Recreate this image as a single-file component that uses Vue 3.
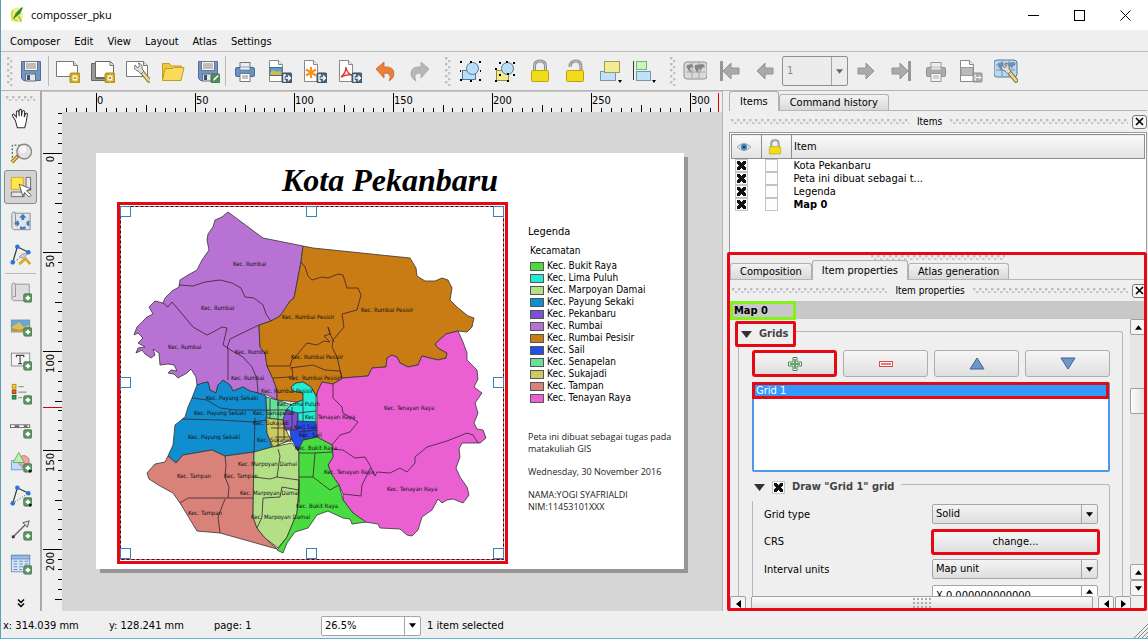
<script setup>
const menus = ['Composer', 'Edit', 'View', 'Layout', 'Atlas', 'Settings']

const fileTools = [
  ['save', 'Save project'], ['sep'], ['new', 'New composer'], ['dup', 'Duplicate composer'], ['manager', 'Composer manager'],
  ['folder', 'Add items from template'], ['template', 'Save as template'], ['sep'], ['print', 'Print'], ['eximg', 'Export as image'],
  ['exsvg', 'Export as SVG'], ['expdf', 'Export as PDF'], ['undo', 'Undo'], ['redo', 'Redo'],
]
const arrangeTools = [
  ['group', 'Group items'], ['ungroup', 'Ungroup items'], ['lock', 'Lock items'], ['unlock', 'Unlock items'],
  ['raise', 'Raise items'], ['align', 'Align items'],
]
const sideTools = [
  ['pan', 'Pan'], ['zoom', 'Zoom'], ['select', 'Select item'], ['content', 'Move content'], ['nodes', 'Edit nodes'], ['sep'],
  ['addmap', 'Add map'], ['addimg', 'Add image'], ['addlabel', 'Add label'], ['addlegend', 'Add legend'], ['addscale', 'Add scalebar'],
  ['addshape', 'Add shape'], ['addnodes', 'Add nodes item'], ['addarrow', 'Add arrow'], ['addtable', 'Add attribute table'],
]

function ticks(from, to) {
  const list = []
  for (let n = from; n <= to; n++) {
    list.push({ n, pos: Math.round(n * 9.9), label: n % 10 === 0 ? n * 5 : null, len: n % 10 === 0 ? 19 : n % 5 === 0 ? 7 : 4 })
  }
  return list
}
const hTicks = ticks(-3, 62)
const vTicks = ticks(-4, 45)

const regions = [
  { fill: '#b772d3', d: 'M228 212L263 238L303 246L301 262L294 298L290 301L285 310L280 316L271 321L259 325L260 347L265 353L267 366L273 379L277 390L277 400L267 395L258 393L250 391L243 387L233 391L230 385L223 380L218 385L216 393L210 390L208 382L203 383L197 385L196 377L191 369L187 373L178 378L174 374L168 373L171 370L177 371L174 365L168 364L160 365L159 353L153 349L155 355L151 358L145 354L142 350L136 353L138 348L145 347L138 343L143 338L138 333L134 335L137 327L147 317L153 314L149 307L155 301L163 303L165 298L172 291L179 287L180 280L188 275L197 270L202 260L209 250L207 240L208 234L213 227L215 220L222 217Z' },
  { fill: '#c97b14', d: 'M303 246L313 248L410 258L416 268L417 276L425 281L435 281L442 278L448 280L452 288L450 300L457 307L468 316L474 318L472 327L467 332L458 331L446 334L435 344L438 348L447 353L446 358L438 360L422 356L418 365L408 367L400 363L397 357L392 355L387 358L386 367L372 368L368 376L343 378L333 384L322 382L317 393L317 397L311 387L303 382L296 383L291 387L293 391L303 393L303 400L297 402L277 400L277 390L273 379L267 366L265 353L260 347L259 325L271 321L280 316L290 301L294 298L301 262Z' },
  { fill: '#ea5fd2', d: 'M458 331L463 342L467 353L467 360L477 370L478 379L474 387L482 393L475 403L478 413L474 423L477 429L483 430L486 438L480 443L462 443L459 449L460 457L456 468L460 477L467 487L469 495L463 503L453 499L447 500L442 503L438 499L432 510L422 517L418 530L412 536L407 535L400 529L380 528L378 524L365 522L353 513L343 500L343 494L339 485L332 475L328 465L333 457L332 445L317 437L317 393L322 382L333 384L343 378L368 376L372 368L386 367L387 358L392 355L397 357L400 363L408 367L418 365L422 356L438 360L446 358L447 353L438 348L435 344L446 334Z' },
  { fill: '#118ecf', d: 'M197 385L203 383L208 382L210 390L216 393L218 385L223 380L230 385L233 391L243 387L250 391L258 393L266 396L267 433L272 447L255 452L225 456L212 450L183 455L176 463L168 456L173 445L175 425L185 417L188 407L192 398Z' },
  { fill: '#d8827a', d: 'M168 456L165 462L155 464L147 473L149 479L160 486L173 493L180 503L197 531L220 533L277 549L265 538L257 528L253 517L254 452L225 456L212 450L183 455L176 463Z' },
  { fill: '#b3df87', d: 'M254 452L272 447L292 443L299 452L299 480L298 503L297 513L287 537L278 548L265 538L257 528L253 517Z' },
  { fill: '#48dc40', d: 'M299 452L296 447L303 440L317 437L332 445L333 457L328 465L332 475L339 485L343 500L353 513L366 522L352 524L350 519L343 518L328 511L317 515L308 528L295 532L287 543L283 553L277 550L287 537L297 513L299 490Z' },
  { fill: '#66e09b', d: 'M266 397L277 400L292 405L290 417L283 420L267 418Z' },
  { fill: '#cbcb62', d: 'M266 418L283 420L287 432L291 440L273 447L267 433Z' },
  { fill: '#7b50d2', d: 'M286 410L298 411L297 430L285 430L283 420Z' },
  { fill: '#22ecd3', d: 'M291 387L296 383L303 382L311 387L316 396L316 422L298 422L298 413L286 410L292 404L303 400L303 393L293 391Z' },
  { fill: '#264ce9', d: 'M297 421L316 422L317 437L303 440L298 451L291 438L290 430L297 430Z' },
]

const boundaries = [
  'M179 285L193 286L205 282L220 280L232 283L241 288L245 297L254 298L263 305L266 314L271 321',
  'M163 303L168 307L172 302L183 315L193 327L207 335L215 331L222 327L227 328L223 345L228 348L228 380',
  'M259 325L230 339L227 348L243 357L252 367L257 379L258 393',
  'M301 262L305 267L308 276L312 280L322 277L328 278L338 274L343 275L347 288L358 288L361 295L357 310L342 314L344 327L333 340L332 347L337 357L342 378',
  'M267 366L290 366L292 360L297 355L301 350L307 343L317 345L324 341L330 342L324 336L330 334L328 327L331 336L334 342',
  'M292 367L293 379M273 378L290 377M290 368L313 365L325 370L340 371L342 378',
  'M333 384L333 398L342 407L343 413L358 422L350 432L340 435L332 445',
  'M332 449L343 450L355 458L365 457L371 467L362 485L361 496L343 494',
  'M371 468L375 476L377 472L390 473L400 468L407 472L415 463L415 457L427 447L447 441L467 433L473 435L478 443',
  'M192 398L207 400L220 408L235 410L290 410M182 419L220 420L253 422L267 420M255 418L254 452',
  'M225 456L226 465L225 477L229 487L228 498M180 503L188 498L253 498M225 499L218 517L220 533',
  'M278 449L280 456L277 477M254 477L270 479L277 477L299 480M299 490L282 487L280 497L263 498L262 517L257 528',
  'M299 453L315 453L313 477L299 477M313 477L330 490L339 485M315 453L332 452M299 480L299 503',
  'M270 399L270 418M278 401L278 447M284 420L284 440M271 428L292 428M275 437L290 437M292 407L292 430M303 400L303 422M298 413L316 411M304 424L304 439M298 432L317 430',
]

const mapLabels = [
  [233, 266, 'Rumbai'], [201, 310, 'Rumbai'], [168, 349, 'Rumbai'], [235, 354, 'Rumbai'], [231, 380, 'Rumbai'],
  [282, 319, 'Rumbai Pesisir'], [361, 312, 'Rumbai Pesisir'], [291, 359, 'Rumbai Pesisir'], [289, 380, 'Rumbai Pesisir'], [261, 393, 'Rumbai Pesisir'],
  [206, 400, 'Payung Sekaki'], [194, 415, 'Payung Sekaki'], [188, 439, 'Payung Sekaki'],
  [253, 415, 'Senapelan'], [253, 425, 'Sukajadi'], [257, 442, 'Sukajadi'], [277, 406, 'Lima Puluh'],
  [305, 419, 'Tenayan Raya'], [384, 410, 'Tenayan Raya'], [324, 474, 'Tenayan Raya'], [387, 491, 'Tenayan Raya'],
  [294, 429, 'Sail'], [299, 437, 'Sail'], [295, 450, 'Bukit Raya'], [296, 508, 'Bukit Raya'],
  [238, 466, 'Marpoyan Damai'], [240, 495, 'Marpoyan Damai'], [251, 519, 'Marpoyan Damai'],
  [177, 478, 'Tampan'], [224, 478, 'Tampan'], [188, 515, 'Tampan'],
]
const handles = [[121, 207], [307, 207], [494, 207], [121, 378], [494, 378], [121, 549], [307, 549], [494, 549]]

const legend = [
  ['Bukit Raya', '#48dc40'], ['Lima Puluh', '#22ecd3'], ['Marpoyan Damai', '#b3df87'], ['Payung Sekaki', '#118ecf'],
  ['Pekanbaru', '#7b50d2'], ['Rumbai', '#b772d3'], ['Rumbai Pesisir', '#c97b14'], ['Sail', '#264ce9'],
  ['Senapelan', '#66e09b'], ['Sukajadi', '#cbcb62'], ['Tampan', '#d8827a'], ['Tenayan Raya', '#ea5fd2'],
]
const items = ['Kota Pekanbaru', 'Peta ini dibuat sebagai t...', 'Legenda', 'Map 0']
</script>

<template>
  <svg class="sprite" aria-hidden="true">
    <defs>
      <g id="badge-add"><rect x="15" y="14" width="9" height="9" rx="1.5" fill="#5f9767" stroke="#42764b" /><path d="M19.500 16v5M17 18.500h5" stroke="#fff" stroke-width="2" /></g>
      <g id="badge-star"><rect x="14" y="14" width="10" height="10" rx="1.500" fill="#c9a417" stroke="#b18f10" /><path d="M19 15.500v7M15.500 19h7M16.500 16.500l5 5M21.500 16.500l-5 5" stroke="#fff" stroke-width="1.200" /><circle cx="19" cy="19" r="1.300" fill="#c9a417" /></g>
      <g id="badge-out"><rect x="14" y="14" width="10" height="10" rx="1.500" fill="#4b6479" stroke="#354b5e" /><path d="M18 16h-2v6h2M17.500 19h4.500M20 16.500l2.500 2.500l-2.500 2.500" fill="none" stroke="#fff" stroke-width="1.300" /></g>
      <g id="wrench"><path d="M14 13l7 8.500" stroke="#8a7440" stroke-width="4.500" stroke-linecap="round" /><path d="M14 13l7 8.500" stroke="#ecd994" stroke-width="2.500" stroke-linecap="round" /><path d="M7 6q-2 5 3 6l3 3l3-3l-2-2q1-5-3.500-6l1 3l-2 2z" fill="#dedede" stroke="#777" /></g>
      <g id="disk"><path d="M2.500 2.500h19v19h-17l-2-2z" fill="#7395c4" stroke="#4c6f9e" /><rect x="5.500" y="2.500" width="13" height="9" fill="#f4f4f4" stroke="#777" /><path d="M7 5h10M7 7h10M7 9h10" stroke="#888" /><rect x="6.500" y="15" width="10" height="7" fill="#e6e6e6" stroke="#56718f" /><rect x="8" y="16" width="3" height="5" fill="#394f6e" /></g>
      <g id="page"><path d="M3.500 1.500h9l4 4v17h-13z" fill="#fff" stroke="#888" /><path d="M12.500 1.500v4h4" fill="#eee" stroke="#888" /></g>
      <g id="globe"><rect x="1" y="3" width="23" height="17" rx="3" /><path d="M3 8h19M3 13h19M9 4v15M16 4v15" stroke-width=".7" /></g>
      <path id="continents" d="M4 6l5-1l1 2l-3 2l1 5l-2-2l-2-3zM12 6l8-1l2 2l-3 2l-1 3l-2-3l-2 5l-2-4z" />
    </defs>
    <symbol id="i-save" viewBox="0 0 24 24"><use href="#disk" /></symbol>
    <symbol id="i-template" viewBox="0 0 24 24"><use href="#disk" /><rect x="15" y="15" width="9" height="9" rx="1.500" fill="#4f8b5c" stroke="#3c7247" /><path d="M17 22l1-2.500l4-3.500l.8 1l-4 4z" fill="#fff" /></symbol>
    <symbol id="i-new" viewBox="0 0 24 24"><path d="M.5 2.500h17l4 4v11h-21z" fill="#fff" stroke="#777" /><path d="M17.500 2.500v4h4" fill="#ddd" stroke="#777" /><use href="#badge-star" /></symbol>
    <symbol id="i-dup" viewBox="0 0 24 24"><path d="M.5 4.500h4v15h12v2h-16z" fill="#999" stroke="#666" /><path d="M4.500 2.500h15l3 3v13h-18z" fill="#fff" stroke="#666" /><path d="M19 2.500v4h4" fill="#ddd" stroke="#777" /><use href="#badge-star" /></symbol>
    <symbol id="i-manager" viewBox="0 0 24 24"><path d="M.5 2.500h17l4 4v11h-21z" fill="#fff" stroke="#777" /><path d="M17.500 2.500v4h4" fill="#ddd" stroke="#777" /><use href="#wrench" x="2" /></symbol>
    <symbol id="i-folder" viewBox="0 0 24 24"><path d="M1.500 20V4.500h7l2 2.500h10v3" fill="#f1c93d" stroke="#c49a26" /><path d="M1.500 21.500L4 9.500h8l1-1h10l-3 13z" fill="#fada5a" stroke="#c49a26" /></symbol>
    <symbol id="i-print" viewBox="0 0 24 24"><rect x="7" y="3.500" width="10" height="8" fill="#eee" stroke="#777" /><rect x="2.500" y="8.500" width="19" height="9" rx="1.500" fill="#6c92c6" stroke="#476b98" /><rect x="7" y="8" width="10" height="3" fill="#e9eef4" stroke="#476b98" stroke-width=".6" /><rect x="7" y="14.500" width="10" height="8" fill="#fff" stroke="#777" /><path d="M9 17h6M9 19h6" stroke="#888" /></symbol>
    <symbol id="i-printg" viewBox="0 0 24 24"><rect x="7" y="3.500" width="10" height="8" fill="#eee" stroke="#999" /><rect x="2.500" y="8.500" width="19" height="9" rx="1.500" fill="#aaa" stroke="#929292" /><rect x="7" y="8" width="10" height="3" fill="#e4e4e4" stroke="#999" stroke-width=".6" /><rect x="7" y="14.500" width="10" height="8" fill="#f5f5f5" stroke="#999" /><path d="M9 17h6M9 19h6" stroke="#aaa" /></symbol>
    <symbol id="i-eximg" viewBox="0 0 24 24"><use href="#page" x="-2" /><rect x="2" y="8.500" width="12" height="8" fill="#5aa3d8" stroke="#476c87" /><path d="M2.500 16v-3l3-2l3 2l3-1l2 1v3z" fill="#dbb947" /><use href="#badge-out" /></symbol>
    <symbol id="i-exsvg" viewBox="0 0 24 24"><use href="#page" x="-2" /><path d="M8 8v11M3 10.500l10 6M13 10.500l-10 6" stroke="#f39322" stroke-width="2.300" /><use href="#badge-out" /></symbol>
    <symbol id="i-expdf" viewBox="0 0 24 24"><use href="#page" x="-2" /><path d="M3 18q5-4 5-10q1 7 6 8q-5-1-11 2" fill="none" stroke="#e33a33" stroke-width="1.500" /><use href="#badge-out" /></symbol>
    <symbol id="i-undo" viewBox="0 0 24 24"><path d="M3 10l8-7v5q10-1 10 7q0 4-5 7q4-8-5-8v5z" fill="#e8813d" stroke="#c66526" stroke-width=".8" /></symbol>
    <symbol id="i-redo" viewBox="0 0 24 24"><path d="M21 10l-8-7v5q-10-1-10 7q0 4 5 7q-4-8 5-8v5z" fill="#b7b7b7" stroke="#a1a1a1" stroke-width=".8" /></symbol>
    <symbol id="i-group" viewBox="0 0 24 24"><rect x="4.500" y="11.500" width="13" height="9" fill="#b9defa" stroke="#57768e" /><circle cx="14.500" cy="9.500" r="6" fill="#b9defa" stroke="#57768e" /><path d="M2 2h2v2h-2zM12 2h2v2h-2zM21 2h2v2h-2zM2 20h2v2h-2zM12 21h2v2h-2zM21 20h2v2h-2zM2 11h1v2h-1zM22 11h1v2h-1z" fill="#000" /></symbol>
    <symbol id="i-ungroup" viewBox="0 0 24 24"><path d="M3.500 11.500h8l4 4v6h-12z" fill="#f2ec8a" stroke="#8d8a4e" /><circle cx="14.500" cy="9.500" r="6" fill="#b9defa" stroke="#57768e" /><path d="M6 3h2v2h-2zM13 2h2v2h-2zM20 3h2v2h-2zM2 9h2v2h-2zM6 15h2v2h-2zM20 15h2v2h-2zM2 21h2v2h-2zM14 21h2v2h-2zM14 14h2v2h-2z" fill="#000" /></symbol>
    <symbol id="i-lock" viewBox="0 0 24 24"><path d="M6.500 12v-5q0-5 5.500-5t5.500 5v5" fill="none" stroke="#8d8d8d" stroke-width="3" /><path d="M6.500 12v-5q0-5 5.500-5t5.500 5v5" fill="none" stroke="#ccc" /><rect x="3.500" y="11.500" width="17" height="11" rx="1" fill="#f0dc1d" stroke="#b9a30c" /></symbol>
    <symbol id="i-unlock" viewBox="0 0 24 24"><path d="M7 8q0-6 6-6q5 0 5 6v4" fill="none" stroke="#8d8d8d" stroke-width="3" /><path d="M7 8q0-6 6-6q5 0 5 6v4" fill="none" stroke="#ccc" /><rect x="3.500" y="11.500" width="17" height="11" rx="1" fill="#f0dc1d" stroke="#b9a30c" /></symbol>
    <symbol id="i-raise" viewBox="0 0 24 24"><rect x="2.500" y="12.500" width="15" height="9" fill="#bfe1fb" stroke="#7695ab" /><rect x="6.500" y="2.500" width="15" height="11" fill="#f1eb93" stroke="#9d9a62" /><path d="M20 21h4l-2 3z" /></symbol>
    <symbol id="i-align" viewBox="0 0 24 24"><path d="M.5 2v19" stroke="#333" /><rect x="3.500" y="2.500" width="10" height="8" fill="#c4f7bd" stroke="#7fae79" /><rect x="3.500" y="12.500" width="14" height="9" fill="#bfe1fb" stroke="#7695ab" /><path d="M19 21h4l-2 3z" /></symbol>
    <symbol id="i-atlas" viewBox="0 0 24 24"><use href="#globe" fill="#dadada" stroke="#8e8e8e" /><use href="#continents" fill="#858585" /></symbol>
    <symbol id="i-first" viewBox="0 0 24 24"><path d="M3.500 2v20" stroke="#979797" stroke-width="3" /><path d="M5 12l8-8v5h8v6h-8v5z" fill="#aaa" stroke="#929292" /></symbol>
    <symbol id="i-prev" viewBox="0 0 24 24"><path d="M4 12l8-8v5h8v6h-8v5z" fill="#aaa" stroke="#929292" /></symbol>
    <symbol id="i-next" viewBox="0 0 24 24"><path d="M20 12l-8-8v5h-8v6h8v5z" fill="#aaa" stroke="#929292" /></symbol>
    <symbol id="i-last" viewBox="0 0 24 24"><path d="M20.500 2v20" stroke="#979797" stroke-width="3" /><path d="M19 12l-8-8v5h-8v6h8v5z" fill="#aaa" stroke="#929292" /></symbol>
    <symbol id="i-export" viewBox="0 0 24 24"><use href="#page" x="-2" /><rect x="2" y="8.500" width="12" height="8" fill="#bbb" stroke="#999" /><rect x="14" y="14" width="9" height="9" rx="1" fill="#aaa" stroke="#8e8e8e" /><path d="M17 16h-1v5h1M17 18.500h5M20 16.500l2 2l-2 2" fill="none" stroke="#fff" /></symbol>
    <symbol id="i-config" viewBox="0 0 24 24"><use href="#globe" fill="#bcd8f0" stroke="#54799f" x="-1" y="-2" /><use href="#continents" fill="#6f8fae" y="-2" /><use href="#wrench" x="1" /></symbol>
    <symbol id="i-pan" viewBox="0 0 24 24"><path d="M6 14L3 9q-1-2 1-2.500l3 3.500V4q1.500-2 2.500 0l.5 5V2.500q1.500-2 2.500 0V9l1-5.500q2-1.500 2.500.5l-.5 6l1.500-4q2-1 2 1l-1.500 9l-1.500 5.500h-8z" fill="#fff" stroke="#333" stroke-width="1.100" /></symbol>
    <symbol id="i-zoom" viewBox="0 0 24 24"><path d="M2.500 17V3.500h9" fill="none" stroke="#222" stroke-dasharray="2 2" /><path d="M2 22l7-7" stroke="#8a6a14" stroke-width="4" /><path d="M2 22l6-6" stroke="#f0cb56" stroke-width="2" /><circle cx="15.500" cy="10.500" r="8" fill="#e0e0e0" fill-opacity=".9" stroke="#888" stroke-width="1.500" /><circle cx="14" cy="8" r="4" fill="#f5f5f5" /></symbol>
    <symbol id="i-select" viewBox="0 0 24 24"><rect x="1.500" y="1.500" width="13" height="13" fill="#fce84d" stroke="#dba51d" /><path d="M17.500 1.500h5v14h-5zM1.500 17.500h14v5h-14z" fill="#e8e8e8" stroke="#666" /><path d="M10 9l13 5l-5 2l5 5l-2 2l-5-5l-2 4z" fill="#fff" stroke="#333" stroke-width=".8" /></symbol>
    <symbol id="i-content" viewBox="0 0 24 24"><path d="M5 3.500h17v18H4q-3-1-2-5V5q0-3 2-3t2 3v12" fill="#e1e5e9" stroke="#85898d" /><path d="M14 4l4 4.500h-2.500v2.500h-3v-2.500h-2.500zM7 11l3 2v3l-3 2v-2.500h-2v-2h2zM21 11l-3 2v3l3 2zM11 18h2l1 1l1-1h2v3h-6z" fill="#3b7bb6" /></symbol>
    <symbol id="i-nodes" viewBox="0 0 24 24"><path d="M3 20L8 3l12 6" fill="none" stroke="#333" stroke-width="1.300" /><path d="M4 20l8-6" stroke="#555" stroke-dasharray="2 2" /><path d="M10 22l7-6l5 6" stroke="#d8a92d" stroke-width="3" fill="none" /><path d="M10 14q4-5 9-3l-5 5z" fill="#ccc" stroke="#999" /><circle cx="3" cy="20" r="2.500" fill="#2f72dd" /><circle cx="8" cy="3" r="2.500" fill="#2f72dd" /><circle cx="20" cy="9" r="2.500" fill="#2f72dd" /></symbol>
    <symbol id="i-addmap" viewBox="0 0 24 24"><path d="M5 3.500h16v18H4q-3-1-2-5V5q0-3 2-3t2 3v12H3" fill="#dedede" stroke="#929292" /><use href="#badge-add" /></symbol>
    <symbol id="i-addimg" viewBox="0 0 24 24"><rect x="1.500" y="5.500" width="20" height="13" fill="#63a9dc" stroke="#888" /><path d="M2 18v-5l8-5l5 5l6-2v7z" fill="#dcbe60" /><path d="M2 18v-4l8 2l11-3v5z" fill="#bd993c" /><use href="#badge-add" /></symbol>
    <symbol id="i-addlabel" viewBox="0 0 24 24"><rect x="1.500" y="4.500" width="20" height="14" fill="#f4f4f4" stroke="#888" /><path d="M7 9v-2h8v2M11 7v9M9 16h4" stroke="#444" stroke-width="1.200" fill="none" /><use href="#badge-add" /></symbol>
    <symbol id="i-addlegend" viewBox="0 0 24 24"><rect x="2.500" y="1.500" width="4" height="4" fill="#ffd032" stroke="#b68b12" /><rect x="2.500" y="7.500" width="4" height="4" fill="#ec641d" stroke="#95380b" /><rect x="2.500" y="13.500" width="4" height="4" fill="#25a35c" stroke="#146b38" /><path d="M9 4h6M9 10h9M9 16h4" stroke="#999" stroke-width="1.500" /><use href="#badge-add" /></symbol>
    <symbol id="i-addscale" viewBox="0 0 24 24"><rect x=".5" y="8.500" width="21" height="3" fill="#fff" stroke="#666" /><path d="M5 10h5M15 10h4" stroke="#666" stroke-width="2" /><use href="#badge-add" /></symbol>
    <symbol id="i-addshape" viewBox="0 0 24 24"><rect x="1.500" y="10.500" width="12" height="10" fill="#bdddfa" stroke="#789ac0" /><circle cx="15" cy="11" r="6" fill="#f1a4a0" stroke="#c87772" /><path d="M9.500 1.500l6 11h-12z" fill="#baf1b2" stroke="#68a95e" /><use href="#badge-add" /><path d="M20 21h4l-2 3z" /></symbol>
    <symbol id="i-addnodes" viewBox="0 0 24 24"><path d="M3 20L8 3l12 6" fill="none" stroke="#333" stroke-width="1.300" /><path d="M3 20l17-11" stroke="#333" stroke-dasharray="1 2" /><circle cx="3" cy="20" r="2.500" fill="#2f72dd" /><circle cx="8" cy="3" r="2.500" fill="#2f72dd" /><circle cx="20" cy="9" r="2.500" fill="#2f72dd" /><use href="#badge-add" /><path d="M20 21h4l-2 3z" /></symbol>
    <symbol id="i-addarrow" viewBox="0 0 24 24"><path d="M3 20L18 5" stroke="#666" stroke-width="1.500" /><path d="M21 2l-2 7l-5-5z" fill="#ddd" stroke="#555" /><rect x="2" y="18" width="3" height="3" fill="#333" /><use href="#badge-add" /></symbol>
    <symbol id="i-addtable" viewBox="0 0 24 24"><rect x="1.500" y="2.500" width="20" height="18" fill="#d8e7f7" stroke="#6a8fb9" /><rect x="1.500" y="2.500" width="20" height="4" fill="#98bde4" stroke="#6a8fb9" /><path d="M4 9h4M10 9h4M16 9h4M4 12h4M10 12h4M16 12h4M4 15h4M10 15h4M4 18h4M10 18h3" stroke="#5b86b5" /><use href="#badge-add" /></symbol>
  </svg>

  <div class="window">
    <header class="titlebar">
      <svg class="logo" viewBox="0 0 16 18"><path d="M3 2L11 1L9 5L14 7L13 16L7 17L1 15L1 6z" fill="#eef086" /><path d="M3 4q-3 6 2 10l3 1" fill="none" stroke="#c4d94f" stroke-width="2" /><path d="M3 14L6 7L12 1l2 0l-3 6z" fill="#318b2b" /><path d="M9 10l3 6" stroke="#b2ca41" stroke-width="2" /></svg>
      <h1>composser_pku</h1>
      <div class="winbtns">
        <button aria-label="Minimize"><svg viewBox="0 0 11 11"><path d="M0 5.500h11" stroke="#000" /></svg></button>
        <button aria-label="Maximize"><svg viewBox="0 0 11 11"><rect x=".5" y=".5" width="10" height="10" fill="none" stroke="#000" /></svg></button>
        <button aria-label="Close"><svg viewBox="0 0 11 11"><path d="M.5.5l10 10M10.500.5l-10 10" stroke="#000" /></svg></button>
      </div>
    </header>

    <nav class="menubar"><button v-for="m in menus" :key="m">{{ m }}</button></nav>

    <div class="toolbar">
      <span class="grip"></span>
      <template v-for="(t, i) in fileTools" :key="i">
        <span v-if="t[0] === 'sep'" class="sep"></span>
        <button v-else class="tool" :aria-label="t[1]"><svg><use :href="'#i-' + t[0]" /></svg></button>
      </template>
      <span class="grip mid"></span>
      <button v-for="t in arrangeTools" :key="t[0]" class="tool" :aria-label="t[1]"><svg><use :href="'#i-' + t[0]" /></svg></button>
      <span class="grip mid"></span>
      <button class="tool" aria-label="Preview atlas"><svg><use href="#i-atlas" /></svg></button>
      <button class="tool" aria-label="First feature"><svg><use href="#i-first" /></svg></button>
      <button class="tool" aria-label="Previous feature"><svg><use href="#i-prev" /></svg></button>
      <span class="combo page-combo">
        <select aria-label="Atlas page" disabled><option>1</option></select>
        <i><svg viewBox="0 0 8 5"><path d="M0 0h8L4 5z" fill="#666" /></svg></i>
      </span>
      <button class="tool" aria-label="Next feature"><svg><use href="#i-next" /></svg></button>
      <button class="tool" aria-label="Last feature"><svg><use href="#i-last" /></svg></button>
      <button class="tool" aria-label="Print atlas"><svg><use href="#i-printg" /></svg></button>
      <button class="tool" aria-label="Export atlas"><svg><use href="#i-export" /></svg></button>
      <button class="tool" aria-label="Atlas settings"><svg><use href="#i-config" /></svg></button>
    </div>

    <main class="main">
      <aside class="sidebar">
        <span class="dots"></span>
        <template v-for="(t, i) in sideTools" :key="i">
          <span v-if="t[0] === 'sep'" class="hsep"></span>
          <button v-else class="side" :class="{ active: t[0] === 'select' }" :aria-label="t[1]"><svg><use :href="'#i-' + t[0]" /></svg></button>
        </template>
        <button class="more" aria-label="More tools"><svg viewBox="0 0 8 9"><path d="M1 .5l3 3l3-3M1 4.500l3 3l3-3" fill="none" stroke="#000" stroke-width="1.500" /></svg></button>
      </aside>

      <section class="view">
        <svg class="hruler">
          <g transform="translate(54 0)">
            <template v-for="t in hTicks" :key="t.n">
              <rect :x="t.pos" :y="20 - t.len" width="1" :height="t.len" />
              <text v-if="t.label !== null" :x="t.pos + 1" y="12">{{ t.label }}</text>
            </template>
            <rect x="622" y="1" width="1" height="19" fill="#d00" />
          </g>
        </svg>
        <svg class="vruler">
          <g transform="translate(0 41)">
            <template v-for="t in vTicks" :key="t.n">
              <rect :x="20 - t.len" :y="t.pos" :width="t.len" height="1" />
              <text v-if="t.label !== null" :transform="`translate(12 ${t.pos + 3}) rotate(-90)`" text-anchor="end">{{ t.label }}</text>
            </template>
            <rect x="1" y="254" width="19" height="1" fill="#d00" />
          </g>
        </svg>
        <div class="canvas">
          <article class="paper">
            <h2>Kota Pekanbaru</h2>
            <svg class="map" viewBox="117 202 391 362">
              <rect x="118.500" y="203.500" width="388" height="359" fill="#fff" stroke="#e50914" stroke-width="3" />
              <rect x="120.500" y="206.500" width="383" height="353" fill="none" stroke="#c98a9c" />
              <rect x="120.500" y="206.500" width="383" height="353" fill="none" stroke="#3a0a18" stroke-dasharray="3 2" />
              <path v-for="r in regions" :key="r.fill" :d="r.d" :fill="r.fill" class="region" />
              <path v-for="(b, i) in boundaries" :key="i" :d="b" class="bound" />
              <text v-for="(l, i) in mapLabels" :key="i" :x="l[0]" :y="l[1]">Kec. {{ l[2] }}</text>
              <rect v-for="(h, i) in handles" :key="'h' + i" :x="h[0] - 0.5" :y="h[1] - 0.5" width="10" height="10" fill="#fff" stroke="#3783b5" />
            </svg>
            <section class="legend">
              <h3>Legenda</h3>
              <h4>Kecamatan</h4>
              <ul><li v-for="l in legend" :key="l[0]"><i :style="{ background: l[1] }"></i>Kec. {{ l[0] }}</li></ul>
            </section>
            <div class="notes">
              <p>Peta ini dibuat sebagai tugas pada<br />matakuliah GIS</p>
              <p>Wednesday, 30 November 2016</p>
              <p>NAMA:YOGI SYAFRIALDI<br />NIM:11453101XXX</p>
            </div>
          </article>
        </div>
      </section>

      <div class="docks">
        <section class="dock items-dock">
          <div class="tabs">
            <button class="tab on">Items</button><button class="tab">Command history</button>
          </div>
          <div class="dock-title"><span class="dots"></span><b>Items</b><span class="dots"></span><button aria-label="Close items"><svg viewBox="0 0 9 9"><path d="M1 1l7 7M8 1l-7 7" /></svg></button></div>
          <div class="tree">
            <table>
              <thead>
                <tr>
                  <th class="c1"><svg viewBox="0 0 14 10" width="14" height="10" aria-label="Visible"><path d="M0 5q7-7 14 0q-7 7-14 0" fill="#d7e4ee" stroke="#93a7b5" /><circle cx="7" cy="5" r="3.200" fill="#5187b4" /><circle cx="7" cy="5" r="1.300" fill="#1e3850" /></svg></th>
                  <th class="c1"><svg width="16" height="16" aria-label="Locked"><use href="#i-lock" /></svg></th>
                  <th>Item</th>
                </tr>
              </thead>
              <tbody>
                <tr v-for="it in items" :key="it">
                  <td><input type="checkbox" checked :aria-label="it + ' visible'" /></td>
                  <td><input type="checkbox" :aria-label="it + ' locked'" /></td>
                  <td :class="{ bold: it === 'Map 0' }">{{ it }}</td>
                </tr>
              </tbody>
            </table>
          </div>
        </section>

        <section class="dock props">
          <span class="dots splitter"></span>
          <div class="tabs">
            <button class="tab">Composition</button><button class="tab on">Item properties</button><button class="tab">Atlas generation</button>
          </div>
          <div class="dock-title"><span class="dots"></span><b>Item properties</b><span class="dots"></span><button aria-label="Close item properties"><svg viewBox="0 0 9 9"><path d="M1 1l7 7M8 1l-7 7" /></svg></button></div>
          <div class="subject"><strong>Map 0</strong></div>
          <div class="scroll">
            <div class="scroll-body">
              <div class="group">
                <div class="group-head"><button class="collapse marked"><svg viewBox="0 0 11 7"><path d="M0 0h11L5.500 7z" fill="#333" /></svg>Grids</button><span class="rule"></span></div>
                <div class="group-body">
                  <div class="btnrow">
                    <button class="btn marked" aria-label="Add grid"><svg viewBox="0 0 14 14" width="14" height="14"><path d="M5 .5h4V5h4.500v4H9v4.500H5V9H.5V5H5z" fill="#fff" stroke="#44864c" /><path d="M7 2v10M2 7h10" stroke="#64a36c" stroke-width="2" /></svg></button>
                    <button class="btn" aria-label="Remove grid"><svg viewBox="0 0 14 6" width="14" height="6"><rect x=".5" y=".5" width="13" height="5" fill="#fff" stroke="#dc4c4c" /><path d="M2 3h10" stroke="#ee7676" stroke-width="2" /></svg></button>
                    <button class="btn" aria-label="Move up"><svg viewBox="0 0 16 13" width="16" height="13"><path d="M8 1l7 11H1z" fill="#6f96c9" stroke="#42658f" /></svg></button>
                    <button class="btn" aria-label="Move down"><svg viewBox="0 0 16 13" width="16" height="13"><path d="M8 12l7-11H1z" fill="#6f96c9" stroke="#42658f" /></svg></button>
                  </div>
                  <ul class="list"><li>Grid 1</li></ul>
                  <div class="group inner">
                    <div class="group-head">
                      <button class="collapse" aria-label="Collapse"><svg viewBox="0 0 11 7"><path d="M0 0h11L5.500 7z" fill="#333" /></svg></button>
                      <label class="check"><input type="checkbox" checked />Draw "Grid 1" grid</label><span class="rule"></span>
                    </div>
                    <div class="form">
                      <label for="gt">Grid type</label>
                      <span class="combo"><select id="gt"><option>Solid</option></select><i><svg viewBox="0 0 8 5"><path d="M0 0h8L4 5z" /></svg></i></span>
                      <label for="crs">CRS</label>
                      <button id="crs" class="btn marked">change...</button>
                      <label for="iu">Interval units</label>
                      <span class="combo"><select id="iu"><option>Map unit</option></select><i><svg viewBox="0 0 8 5"><path d="M0 0h8L4 5z" /></svg></i></span>
                      <span></span>
                      <span class="combo spin"><input aria-label="Interval X" value="X 0.000000000000" /><i><svg viewBox="0 0 8 5"><path d="M0 5h8L4 0z" /></svg></i></span>
                    </div>
                  </div>
                </div>
              </div>
            </div>
            <div class="vbar">
              <button aria-label="Scroll up"><svg viewBox="0 0 8 5"><path d="M0 5h8L4 0z" /></svg></button>
              <span class="thumb"></span>
              <button class="last" aria-label="Scroll up again"><svg viewBox="0 0 8 5"><path d="M0 5h8L4 0z" /></svg></button>
              <button aria-label="Scroll down"><svg viewBox="0 0 8 5"><path d="M0 0h8L4 5z" /></svg></button>
            </div>
          </div>
          <div class="hbar">
            <button aria-label="Scroll left"><svg class="side-arrow" viewBox="0 0 5 8"><path d="M5 0v8L0 4z" /></svg></button>
            <span class="hthumb"><span class="knurl"></span></span>
            <button aria-label="Scroll left again"><svg class="side-arrow" viewBox="0 0 5 8"><path d="M5 0v8L0 4z" /></svg></button>
            <button aria-label="Scroll right"><svg class="side-arrow" viewBox="0 0 5 8"><path d="M0 0v8L5 4z" /></svg></button>
          </div>
        </section>
      </div>
    </main>

    <footer class="status">
      <span class="sx">x: 314.039 mm</span><span class="sy">y: 128.241 mm</span><span class="sp">page: 1</span>
      <span class="combo zoom-combo"><select aria-label="Zoom"><option>26.5%</option></select><i><svg viewBox="0 0 8 5"><path d="M0 0h8L4 5z" /></svg></i></span>
      <span>1 item selected</span>
      <svg class="resize" viewBox="0 0 14 14"><path d="M0 14L14 0M4 14L14 4M8 14L14 8M12 14l2-2" stroke="#888" /></svg>
    </footer>
  </div>
</template>

<style>
body { margin: 0; }
</style>

<style scoped>
* { box-sizing: border-box; }
.sprite { position: absolute; width: 0; height: 0; }
.window {
  display: flex; flex-direction: column; height: 100vh; overflow: hidden;
  border-left: 1px solid #5c9fb5; border-bottom: 1px solid #5fb4cf;
  background: #efefef; color: #000;
  font: 11px/14px "DejaVu Sans Condensed", "DejaVu Sans", sans-serif;
}
button, select, input { font: inherit; color: inherit; margin: 0; padding: 0; }
button { background: none; border: 0; }
svg { display: block; flex: none; }
h1, h2, h3, h4, p, ul { margin: 0; padding: 0; font-weight: normal; list-style: none; }

.titlebar { flex: none; height: 30px; background: #fff; display: flex; align-items: center; padding-left: 9px; }
.logo { width: 15px; height: 18px; }
.titlebar h1 { font: 11px/16px "Open Sans", sans-serif; margin-left: 6px; }
.winbtns { margin-left: auto; display: flex; }
.winbtns button { width: 46px; height: 28px; display: flex; align-items: center; justify-content: center; }
.winbtns svg { width: 11px; height: 11px; }
.menubar { flex: none; height: 22px; display: flex; gap: 14px; padding: 2px 9px 0; align-items: center; border-bottom: 1px solid #bdbdbd; }
.toolbar { flex: none; height: 39px; display: flex; align-items: center; padding-left: 6px; border-bottom: 1px solid #b4b4b4; }
.grip {
  flex: none; width: 6px; height: 29px;
  background: radial-gradient(circle at 1px 1px, #bdbdbd 1px, transparent 2px) 0 0 / 6px 6px, radial-gradient(circle at 1px 1px, #c4c4c4 1px, transparent 2px) 3px 3px / 6px 6px;
}
.grip.mid { margin: 0 1px 0 8px; }
.tool { flex: none; width: 35px; height: 36px; display: flex; align-items: center; justify-content: center; }
.tool svg { width: 24px; height: 24px; overflow: visible; }
.sep { flex: none; width: 1px; height: 30px; background: #bbb; margin: 0 1px 0 0; }
.page-combo { width: 66px; height: 30px; color: #888; }

.combo { flex: none; display: flex; position: relative; border: 1px solid #a5a5a5; border-radius: 2px; background: linear-gradient(#f4f4f4, #dedede); }
.combo select, .combo input { appearance: none; flex: 1; min-width: 0; border: 0; background: none; padding: 0 0 0 3px; outline: none; opacity: 1; }
.combo i { width: 16px; border-left: 1px solid #a5a5a5; display: flex; align-items: center; justify-content: center; }
.combo i svg { width: 7px; height: 5px; }
.combo.page-combo { background: #ececec; border: 1px solid #8f8f8f; }
.page-combo select { padding-left: 4px; color: #888; }

.main { flex: 1; min-height: 0; display: flex; }
.sidebar { flex: none; width: 40px; display: flex; flex-direction: column; align-items: center; padding-top: 5px; border-right: 1px solid #aaa; overflow: hidden; }
.dots {
  display: block; height: 5px;
  background: radial-gradient(circle at 1px 1px, #bdbdbd 1px, transparent 2px) 0 0 / 6px 6px, radial-gradient(circle at 1px 1px, #c8c8c8 1px, transparent 2px) 3px 3px / 6px 6px;
}
.sidebar .dots { width: 30px; flex: none; margin-bottom: 1px; }
.side { flex: none; width: 33px; height: 34px; display: flex; align-items: center; justify-content: center; border: 1px solid transparent; border-radius: 3px; }
.side svg { width: 22px; height: 22px; overflow: visible; }
.side.active { background: #d3d3d3; border-color: #8b8b8b; }
.hsep { flex: none; width: 31px; height: 1px; background: #bbb; margin: 1px 0; }
.more { margin-top: 18px; }
.more svg { width: 8px; height: 9px; }

.view { flex: 1; min-width: 0; display: grid; grid-template: 20px 1fr / 20px 1fr; border-left: 1px solid #aaa; border-top: 1px solid #c8c8c8; }
.hruler { grid-column: 1 / 3; width: 100%; height: 20px; }
.vruler { width: 20px; height: 100%; }
.hruler, .vruler { font-size: 11px; }
.canvas { background: #d6d6d6; position: relative; overflow: hidden; }
.paper { position: absolute; left: 34px; top: 41px; width: 588px; height: 416px; background: #fff; box-shadow: 4px 4px 0 -1px #969696, 4px 4px 0 0 #969696; }
.paper h2 { position: absolute; left: 186px; top: 8px; font: italic bold 32px/38px "Liberation Serif", serif; white-space: nowrap; }
.map { position: absolute; left: 21px; top: 49px; width: 391px; height: 362px; }
.map text { font: 6px "DejaVu Sans Condensed", "DejaVu Sans", sans-serif; fill: #111; }
.region { stroke: #333; stroke-width: .8; }
.bound { fill: none; stroke: #3a2230; stroke-width: .8; }
.legend { position: absolute; left: 432px; top: 72px; white-space: nowrap; font: 10px/12px "DejaVu Sans Condensed", "DejaVu Sans", sans-serif; }
.legend h3 { font-size: 11px; line-height: 14px; }
.legend h4 { font-size: 10px; line-height: 12px; margin: 6px 0 3px 2px; }
.legend li { display: flex; align-items: center; gap: 3px; margin-left: 2px; }
.legend i { width: 14px; height: 9px; border: 1px solid #555; }
.notes { position: absolute; left: 432px; top: 278px; font: 9px/12px "Open Sans", sans-serif; white-space: nowrap; color: #222; }
.notes p + p { margin-top: 11px; }

.docks { flex: none; width: 426px; display: flex; flex-direction: column; padding: 1px 1px 0 4px; border-left: 1px solid #b4b4b4; }
.dock { display: flex; flex-direction: column; min-width: 0; }
.items-dock { flex: none; height: 160px; padding-left: 2px; }
.tabs { flex: none; display: flex; align-items: flex-end; height: 19px; border-bottom: 1px solid #b5b5b5; }
.tab { height: 16px; padding: 0 9px; border: 1px solid #b0b0b0; border-bottom: 0; border-radius: 3px 3px 0 0; background: linear-gradient(#f3f3f3, #d9d9d9); white-space: nowrap; }
.tab.on { height: 20px; margin-bottom: -1px; background: #efefef; }
.items-dock .tab { padding: 0 10px; }
.dock-title { flex: none; height: 21px; display: flex; align-items: center; gap: 8px; padding-left: 2px; }
.dock-title b { font-weight: normal; font-size: 10px; }
.dock-title .dots { flex: 1; }
.dock-title button { width: 15px; height: 14px; border: 1px solid #777; border-radius: 3px; background: #f6f6f6; display: flex; align-items: center; justify-content: center; margin-left: -4px; }
.dock-title button svg { width: 9px; height: 9px; stroke: #000; stroke-width: 1.6; }
.tree { flex: 1; background: #fff; border: 1px solid #999; border-bottom: 0; padding: 1px; overflow: hidden; }
.tree table { width: 100%; border-collapse: collapse; table-layout: fixed; }
.tree th { height: 24px; padding: 0 0 0 2px; text-align: left; font-weight: normal; border: 1px solid #8e8e8e; background: linear-gradient(#fafafa, #e2e2e2); }
.tree th.c1 { width: 30px; padding-left: 5px; }
.tree td { height: 13px; line-height: 13px; padding: 0 0 0 3px; white-space: nowrap; }
.tree td:last-child { padding-left: 2px; }
.bold { font-weight: bold; }
input[type="checkbox"] {
  appearance: none; display: block; flex: none; width: 13px; height: 13px; border: 1px solid #c4c4c4; background: #fdfdfd;
}
input[type="checkbox"]:checked {
  background:
    linear-gradient(45deg, transparent 38%, #111 38%, #111 62%, transparent 62%) center / 9px 9px no-repeat,
    linear-gradient(-45deg, transparent 38%, #111 38%, #111 62%, transparent 62%) center / 9px 9px no-repeat, #fdfdfd;
}

.props { flex: 1; min-height: 0; position: relative; padding: 3px 2px 1px 3px; overflow: hidden; }
.props::after { content: ""; position: absolute; inset: 0; border: 3px solid #e50914; border-radius: 2px; pointer-events: none; }
.splitter { flex: none; width: 134px; margin: 0 auto; }
.props .tabs { height: 20px; }
.props .dock-title { height: 21px; margin-right: -2px; }
.subject { flex: none; height: 18px; display: flex; align-items: center; background: #c8c8c8; }
.subject strong { height: 19px; width: 66px; line-height: 14px; border: 3px solid #84f01c; padding-left: 1px; }
.scroll { flex: 1; min-height: 0; display: flex; }
.scroll-body { flex: 1; min-width: 0; overflow: hidden; padding: 2px 7px 0 8px; }
.group { display: flex; flex-direction: column; }
.group-head { display: flex; align-items: flex-end; height: 26px; font-weight: bold; color: #444; }
.rule { flex: 1; height: 16px; border: solid #b7b7b7; border-width: 1px 1px 0 0; border-radius: 0 3px 0 0; }
.collapse { display: flex; align-items: center; gap: 7px; font-weight: bold; }
.collapse svg { width: 11px; height: 7px; }
.marked { border: 3px solid #e50914 !important; border-radius: 2px; }
.group-head .marked { width: 61px; height: 26px; margin-left: -3px; padding-left: 3px; }
.group-body { border: solid #b7b7b7; border-width: 0 1px; padding: 3px 12px 0 13px; height: 400px; }
.btnrow { display: grid; grid-template-columns: repeat(4, 1fr); gap: 6px; }
.btn { height: 27px; border: 1px solid #adadad; border-radius: 3px; background: linear-gradient(#f6f6f6, #dfdfdf); display: flex; align-items: center; justify-content: center; }
.list { height: 90px; margin-top: 5px; border: 2px solid #4d9be6; background: #fff; border-radius: 2px; }
.list li { margin: -2px -1px 0 -2px; height: 17px; padding-left: 1px; background: #3399ff; color: #fff; border: 3px solid #e50914; line-height: 11px; }
.inner .group-head { height: 29px; align-items: flex-end; }
.inner .rule { height: 17px; }
.inner .collapse { height: 28px; padding: 0 7px 0 2px; }
.check { display: flex; align-items: center; gap: 7px; height: 28px; padding-right: 7px; }
.form { border: solid #b7b7b7; border-width: 0 1px; display: grid; grid-template-columns: 1fr 169px; align-items: center; row-gap: 2px; padding: 1px 9px 0 11px; height: 200px; align-content: start; }
.form .combo { height: 20px; margin: 2px 2px 3px 1px; }
.form .btn { height: 26px; }
.form .combo.spin { height: 22px; background: #fff; margin-top: 1px; }
.spin i { align-items: flex-start; padding-top: 3px; }
.vbar { flex: none; width: 15px; display: flex; flex-direction: column; position: relative; background: #e6e6e6; }
.vbar button, .hbar button { flex: none; width: 16px; height: 16px; border: 1px solid #a0a0a0; border-radius: 2px; background: #f5f5f5; display: flex; align-items: center; justify-content: center; }
.vbar svg { width: 7px; height: 5px; }
.vbar .last { margin-top: auto; }
.thumb { flex: none; width: 16px; height: 26px; margin-top: 53px; border: 1px solid #a0a0a0; border-radius: 2px; background: linear-gradient(90deg, #fdfdfd, #dedede); }
.hbar { flex: none; height: 14px; display: flex; gap: 1px; padding-right: 14px; }
.hbar .side-arrow { width: 5px; height: 8px; }
.hthumb { flex: 1; margin: 0 4px; border: 1px solid #a0a0a0; border-radius: 2px; background: linear-gradient(#fdfdfd, #dedede); display: flex; align-items: center; justify-content: center; }
.knurl { width: 18px; height: 10px; background: radial-gradient(circle at 1px 1px, #aaa 1px, transparent 1px) 0 0 / 4px 4px; }

.status { flex: none; height: 27px; display: flex; align-items: center; padding: 2px 0 0 2px; position: relative; white-space: nowrap; }
.sx { width: 106px; }
.sy { width: 105px; }
.sp { width: 107px; }
.zoom-combo { width: 100px; height: 20px; background: #fff; margin-right: 6px; }
.resize { position: absolute; right: 0; bottom: 0; width: 14px; height: 14px; }
</style>
